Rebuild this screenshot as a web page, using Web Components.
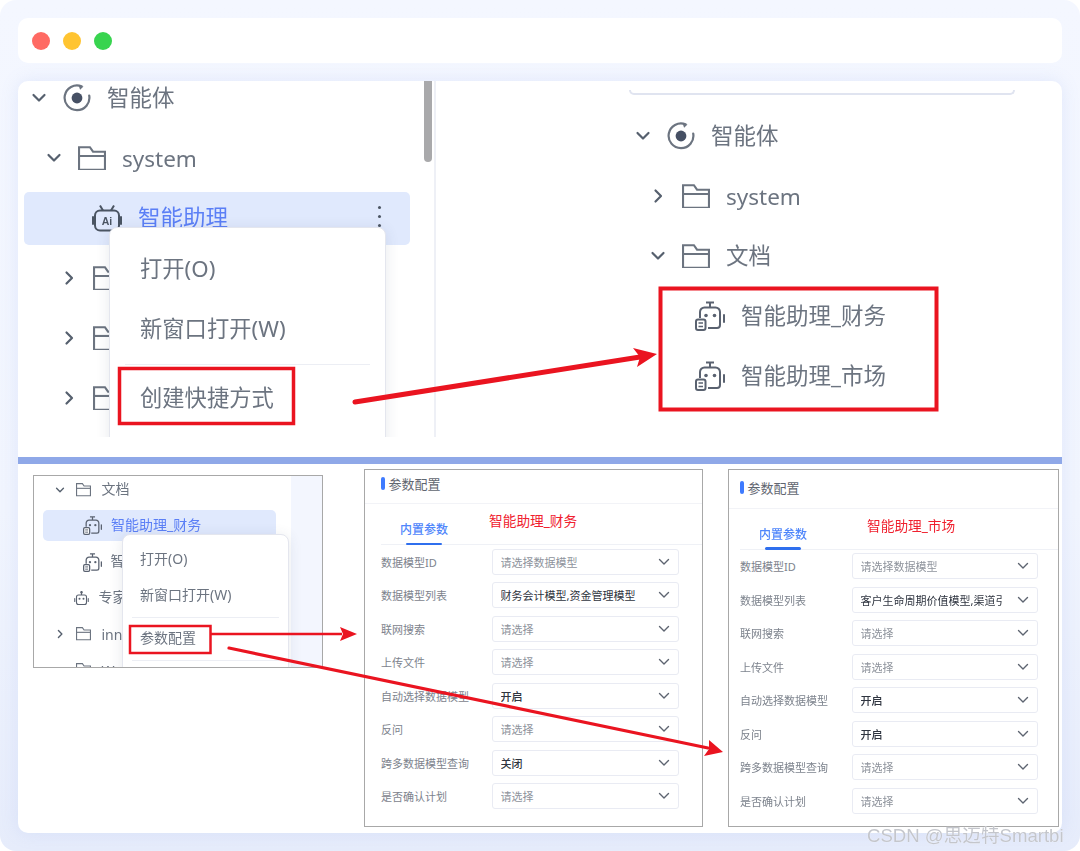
<!DOCTYPE html>
<html lang="zh">
<head>
<meta charset="utf-8">
<title>智能体</title>
<style>
  html, body { margin: 0; padding: 0; background: #fff; }
  body { font-family: "Noto Sans", "Noto Sans CJK SC", sans-serif; }
</style>
</head>
<body>
<app-window>
  <section-top slot="top">
    <tree-pane slot="left">
      <tree-row chev="down" icon="agent" style="--x:13px;margin-top:-13px">智能体</tree-row>
      <tree-row chev="down" icon="folder" style="--x:28px;--lift:0px">system</tree-row>
      <tree-row icon="ai" active dots style="--x:36px;--icon:30px;margin-left:6px;margin-right:24px">智能助理</tree-row>
      <tree-row chev="right" icon="folder" style="--x:43px"></tree-row>
      <tree-row chev="right" icon="folder" style="--x:43px"></tree-row>
      <tree-row chev="right" icon="folder" style="--x:43px"></tree-row>
      <pop-menu style="left:91px;top:146px;width:277px;--item-h:60px;--item-font:22.300px;--item-pad:30px;--item-lift:6px;--menu-pad:12px;--hr-gap:4px;--hr-in:15px">
        <menu-item>打开(O)</menu-item>
        <menu-item>新窗口打开(W)</menu-item>
        <menu-line></menu-line>
        <menu-item>创建快捷方式</menu-item>
      </pop-menu>
    </tree-pane>
    <tree-pane slot="right">
      <search-edge></search-edge>
      <tree-row chev="down" icon="agent" style="--x:199px;margin-top:11px">智能体</tree-row>
      <tree-row chev="right" icon="folder" style="--x:214px;--lift:0px">system</tree-row>
      <tree-row chev="down" icon="folder" style="--x:214px">文档</tree-row>
      <tree-row icon="bot" style="--x:227px;--icon:30px">智能助理_财务</tree-row>
      <tree-row icon="bot" style="--x:227px;--icon:30px">智能助理_市场</tree-row>
    </tree-pane>
  </section-top>

  <section-bottom slot="bottom">
    <mini-tree slot="tree">
      <tree-row chev="down" icon="folder" style="--x:20.500px;margin-top:-4px">文档</tree-row>
      <tree-row icon="bot" active style="--x:21px;--gap:9px;--icon:19px;--lift:2px;height:31px;margin:1.500px 46px 3.500px 9px">智能助理_财务</tree-row>
      <tree-row icon="bot" style="--x:29.500px;--gap:9px;--icon:19px">智</tree-row>
      <tree-row icon="robot" style="--x:19.500px;--gap:10px">专家</tree-row>
      <tree-row chev="right" icon="folder" style="--x:20.500px;--lift:0px">inn</tree-row>
      <tree-row icon="folder" style="--x:20.500px;--lift:0px">W</tree-row>
      <pop-menu slot="over" style="left:88px;top:58px;width:167px;--item-h:36px;--item-font:14px;--item-pad:17px;--item-lift:4px;--menu-pad:7px;--hr-gap:3px;--hr-in:9px">
        <menu-item>打开(O)</menu-item>
        <menu-item>新窗口打开(W)</menu-item>
        <menu-line></menu-line>
        <menu-item>参数配置</menu-item>
        <menu-line></menu-line>
      </pop-menu>
    </mini-tree>

    <config-panel label="智能助理_财务" style="--w:339px;--pad:16px;--head:34px;--head-lift:6px;--col:110.500px;--in:187px;--ml:41px;--lx:124px;--ly:40px">
      <config-row name="数据模型ID" value="请选择数据模型"></config-row>
      <config-row name="数据模型列表" value="财务会计模型,资金管理模型" set></config-row>
      <config-row name="联网搜索" value="请选择"></config-row>
      <config-row name="上传文件" value="请选择"></config-row>
      <config-row name="自动选择数据模型" value="开启" set strong></config-row>
      <config-row name="反问" value="请选择"></config-row>
      <config-row name="跨多数据模型查询" value="关闭" set strong></config-row>
      <config-row name="是否确认计划" value="请选择"></config-row>
    </config-panel>

    <config-panel label="智能助理_市场" style="--w:331px;--pad:11px;--head:38.500px;--head-lift:3px;--col:111.500px;--in:186px;--ml:25px;--lx:138px;--ly:45px">
      <config-row name="数据模型ID" value="请选择数据模型"></config-row>
      <config-row name="数据模型列表" value="客户生命周期价值模型,渠道引流模型" set></config-row>
      <config-row name="联网搜索" value="请选择"></config-row>
      <config-row name="上传文件" value="请选择"></config-row>
      <config-row name="自动选择数据模型" value="开启" set strong></config-row>
      <config-row name="反问" value="开启" set strong></config-row>
      <config-row name="跨多数据模型查询" value="请选择"></config-row>
      <config-row name="是否确认计划" value="请选择"></config-row>
    </config-panel>
  </section-bottom>
</app-window>

<script>
(function() {
  'use strict';

  function make(tag, css, html, init) {
    customElements.define(tag, class extends HTMLElement {
      constructor() {
        super();
        this.attachShadow({mode: 'open'});
      }
      connectedCallback() {
        this.shadowRoot.innerHTML = `<style>${css}</style>${typeof html === 'function' ? html(this) : html}`;
        if (init) init(this);
      }
    });
  }

  const grey = '#6c7480';
  const icons = {
    agent: `<svg width="28" height="30" viewBox="0 0 28 30" fill="none"><path d="M18.500 3.200A12.400 12.400 0 1 0 26.200 12.500" stroke="${grey}" stroke-width="2.200" stroke-linecap="round"/><path d="M15.500 2.200l5 1.200-3.400 3.400z" fill="${grey}"/><circle cx="14" cy="15" r="5.400" fill="#465064"/></svg>`,
    folder: `<svg viewBox="0 0 27 24" fill="none" stroke="${grey}" stroke-width="2"><path d="M1 1.200H11.500L14.500 5.500H26V23H1Z"/><path d="M1 9.600H26"/></svg>`,
    ai: `<svg viewBox="0 0 30 28" fill="none" stroke="#4b5563" stroke-width="2"><path d="M8 1.500l3 5M22 1.500l-3 5"/><rect x="3" y="6.500" width="24" height="20" rx="5"/><path d="M1 13v7M29 13v7" stroke-linecap="round"/><text x="15" y="21" text-anchor="middle" font-size="10.500" font-weight="700" font-family="Liberation Sans, sans-serif" fill="#4b5563" stroke="none">Ai</text></svg>`,
    bot: `<svg viewBox="0 0 30 30" fill="none" stroke="#5a6270" stroke-width="2"><path d="M11 1.500h8M15 1.500v5"/><path d="M5 17v-6a4.500 4.500 0 0 1 4.500-4.500h11A4.500 4.500 0 0 1 25 11v13a3 3 0 0 1-3 3H13"/><path d="M29 14v7" stroke-linecap="round"/><circle cx="11" cy="14.500" r="1.800" fill="#5a6270" stroke="none"/><circle cx="19.500" cy="14.500" r="1.800" fill="#5a6270" stroke="none"/><rect x="1" y="18.500" width="9.500" height="10.500" rx="2" fill="#fff"/><path d="M3.500 22h4.500M3.500 25.500h4.500" stroke-width="1.500"/></svg>`,
    robot: `<svg viewBox="0 0 30 30" fill="none" stroke="#5a6270" stroke-width="2.200"><path d="M15 2v6"/><circle cx="15" cy="2.500" r="1.500" fill="#5a6270"/><rect x="5" y="8" width="20" height="19" rx="4"/><path d="M1.500 15v6M28.500 15v6" stroke-linecap="round"/><circle cx="11" cy="15.500" r="2" fill="#5a6270" stroke="none"/><circle cx="19" cy="15.500" r="2" fill="#5a6270" stroke="none"/></svg>`
  };
  const chevs = {
    down: '<svg viewBox="0 0 16 10" fill="none" stroke="#56606e" stroke-width="2.200" stroke-linecap="round" stroke-linejoin="round"><path d="M2.500 2l5.500 5.500L13.500 2"/></svg>',
    right: '<svg viewBox="0 0 16 16" fill="none" stroke="#56606e" stroke-width="2.200" stroke-linecap="round" stroke-linejoin="round"><path d="M5.500 2.500L11 8l-5.500 5.500"/></svg>'
  };

  make('app-window', `
    :host { display: block; box-sizing: border-box; width: 1080px; height: 851px; padding: 18px; position: relative; overflow: hidden;
      border-radius: 16px; background: linear-gradient(180deg, #f4f7ff 0%, #f1f5fe 60%, #e6ecfb 100%); }
    .bar { height: 45px; background: #fff; border-radius: 10px; display: flex; align-items: center; gap: 13px; padding-left: 14px; margin-bottom: 18px; }
    .bar i { width: 18px; height: 18px; border-radius: 50%; }
    .card { height: 752px; background: #fff; border-radius: 10px; overflow: hidden; box-shadow: 0 0 18px rgba(130,155,230,.16); filter: blur(.45px); }
    .rule { height: 7px; margin-top: 20px; background: #8fa8e8; }
    svg.notes { position: absolute; left: 0; top: 0; filter: blur(.3px); }
    .mark { position: absolute; left: 867px; top: 820px; font: 18.600px "Liberation Sans", "Noto Sans CJK SC", sans-serif; color: #c4c6cc; text-shadow: 0 0 1px #fff; white-space: nowrap; filter: blur(.3px); }
  `, `
    <div class="bar"><i style="background:#ff6a63"></i><i style="background:#ffc431"></i><i style="background:#38d44f"></i></div>
    <div class="card"><slot name="top"></slot><div class="rule"></div><slot name="bottom"></slot></div>
    <svg class="notes" width="1080" height="851" viewBox="0 0 1080 851" fill="none" stroke="#ea1420">
      <rect x="119.500" y="368.500" width="174" height="55" stroke-width="3.500"/>
      <rect x="660.500" y="288.500" width="276" height="121" stroke-width="4"/>
      <rect x="130" y="626" width="80.500" height="27" stroke-width="2.500"/>
      <path d="M355 402L640 357" stroke-width="5" stroke-linecap="round"/>
      <path d="M633 348L657 354L637 367L640 357Z" fill="#ea1420" stroke="none"/>
      <path d="M211 634H342" stroke-width="2.500"/>
      <path d="M340 627L357 634L340 641L343 634Z" fill="#ea1420" stroke="none"/>
      <path d="M229 648L708 748" stroke-width="3.200" stroke-linecap="round"/>
      <path d="M709 740L723 752L704 756L709 749Z" fill="#ea1420" stroke="none"/>
    </svg>
    <span class="mark">CSDN @思迈特Smartbi</span>
  `);

  make('section-top', `
    :host { display: grid; grid-template-columns: 418px 626px; height: 356px; overflow: hidden; }
    ::slotted([slot=left]) { border-right: 2px solid #eef0f6; }
  `, '<slot name="left"></slot><slot name="right"></slot>');

  make('tree-pane', `
    :host { display: block; position: relative; overflow: hidden; height: 356px; box-sizing: border-box; --row-h: 60px; --row-font: 22.500px; --chev: 16px; --gap: 16px; --icon: 28px; --lift: 3px; }
    .thumb { position: absolute; right: 2px; top: 0; width: 8px; height: 81px; background: #a9a9ab; border-radius: 0 0 4px 4px; }
  `, el => `<slot></slot>${el.getAttribute('slot') === 'left' ? '<div class="thumb"></div>' : ''}`);

  make('search-edge', `
    :host { display: block; box-sizing: border-box; width: 386px; height: 5px; margin: 9px 0 0 193px; border: 2px solid #e0e4f0; border-top: 0; border-radius: 0 0 5px 5px; }
  `, '');

  make('tree-row', `
    :host { display: flex; align-items: center; box-sizing: border-box; height: var(--row-h); padding-left: var(--x); font-size: var(--row-font); color: ${grey}; white-space: nowrap; position: relative; }
    :host([active]) { height: calc(var(--row-h) - 7px); margin-top: 3.500px; margin-bottom: 3.500px; background: #e0e9fd; border-radius: 5px; color: #5b7ff6; }
    .chev { width: var(--chev); flex: none; display: flex; align-items: center; }
    .chev svg { width: 100%; display: block; }
    .icon { width: var(--icon); margin: 0 var(--gap); flex: none; display: flex; align-items: center; }
    .icon svg { width: 100%; display: block; }
    .t { padding-bottom: var(--lift); }
    .dots { position: absolute; right: 29px; top: 14px; width: 3.500px; height: 3.500px; border-radius: 50%; background: #4b5563; box-shadow: 0 9px 0 #4b5563, 0 18px 0 #4b5563; }
  `, el => `
    <span class="chev">${chevs[el.getAttribute('chev')] || ''}</span>
    <span class="icon">${icons[el.getAttribute('icon')]}</span>
    <span class="t"><slot></slot></span>
    ${el.hasAttribute('dots') ? '<span class="dots"></span>' : ''}
  `);

  make('pop-menu', `
    :host { display: block; position: absolute; box-sizing: border-box; height: 300px; padding-top: var(--menu-pad); background: #fff; border: 1px solid #e4e6ee; border-radius: 8px; box-shadow: 0 2px 14px rgba(60,70,100,.12); z-index: 2; }
  `, '<slot></slot>');

  make('menu-item', `
    :host { display: flex; align-items: center; box-sizing: border-box; height: var(--item-h); padding-left: var(--item-pad); padding-bottom: var(--item-lift); font-size: var(--item-font); color: ${grey}; white-space: nowrap; }
  `, '<slot></slot>');

  make('menu-line', `
    :host { display: block; height: 1px; margin: var(--hr-gap) var(--hr-in); background: #eceef4; }
  `, '');

  make('section-bottom', `
    :host { display: flex; align-items: flex-start; height: 369px; }
  `, '<slot name="tree"></slot><slot></slot>');

  make('mini-tree', `
    :host { display: block; position: relative; overflow: hidden; box-sizing: border-box; width: 290px; height: 193px; margin: 11px 0 0 15px; border: 1.500px solid #a8a8a8;
      background: linear-gradient(90deg, #fff 257px, #f3f6fe 257px); --row-h: 36px; --row-font: 14px; --chev: 10px; --gap: 11px; --icon: 15px; --lift: 4px; }
  `, '<slot></slot><slot name="over"></slot>');

  make('config-panel', `
    :host { display: block; position: relative; box-sizing: border-box; flex: none; width: var(--w); height: 358px; margin: 5px 0 0 var(--ml); border: 1.500px solid #a8a8a8; background: #fff; }
    .head { box-sizing: border-box; height: var(--head); display: flex; align-items: center; padding: 0 0 var(--head-lift) var(--pad); gap: 4px; font-size: 13px; color: #5f6670; border-bottom: 1px solid #f2f3f7; }
    .head i { width: 3.500px; height: 13px; border-radius: 2px; background: #3f7bff; }
    .tabs { box-sizing: border-box; height: 41px; margin-left: var(--pad); border-bottom: 1px solid #eff1f6; padding-left: 19px; display: flex; align-items: flex-end; }
    .tab { font-size: 12px; font-weight: 500; color: #4f86fb; padding: 0 0 5px; line-height: 18px; position: relative; width: 48px; white-space: nowrap; }
    .tab::after { content: ""; position: absolute; left: 6px; bottom: -1px; width: 36px; height: 2.500px; border-radius: 2px; background: #2f6fee; }
    .rows { padding: 3.500px 0 0 var(--pad); display: grid; row-gap: 7.500px; }
    .who { position: absolute; left: var(--lx); top: var(--ly); font-size: 13.700px; color: #f0212f; white-space: nowrap; }
  `, el => `
    <div class="head"><i></i>参数配置</div>
    <div class="tabs"><span class="tab">内置参数</span></div>
    <div class="rows"><slot></slot></div>
    <span class="who">${el.getAttribute('label')}</span>
  `);

  make('config-row', `
    :host { display: grid; grid-template-columns: var(--col) var(--in); align-items: center; height: 26px; font-size: 11px; color: #7d838d; }
    .name { white-space: nowrap; }
    .box { box-sizing: border-box; height: 26px; display: flex; align-items: center; justify-content: space-between; padding: 0 8px; border: 1.500px solid #e9ebf3; border-radius: 3px; color: #8e939c; }
    .box.set { color: #2f3540; }
    .box.strong { font-weight: 500; }
    .txt { width: 143px; overflow: hidden; white-space: nowrap; }
    svg { width: 12px; flex: none; display: block; }
  `, el => `
    <span class="name">${el.getAttribute('name')}</span>
    <span class="box${el.hasAttribute('set') ? ' set' : ''}${el.hasAttribute('strong') ? ' strong' : ''}">
      <span class="txt">${el.getAttribute('value')}</span>
      <svg viewBox="0 0 12 8" fill="none" stroke="#5d6470" stroke-width="1.400" stroke-linecap="round" stroke-linejoin="round"><path d="M1.500 1.500L6 6l4.500-4.500"/></svg>
    </span>
  `);
}());
</script>
</body>
</html>
